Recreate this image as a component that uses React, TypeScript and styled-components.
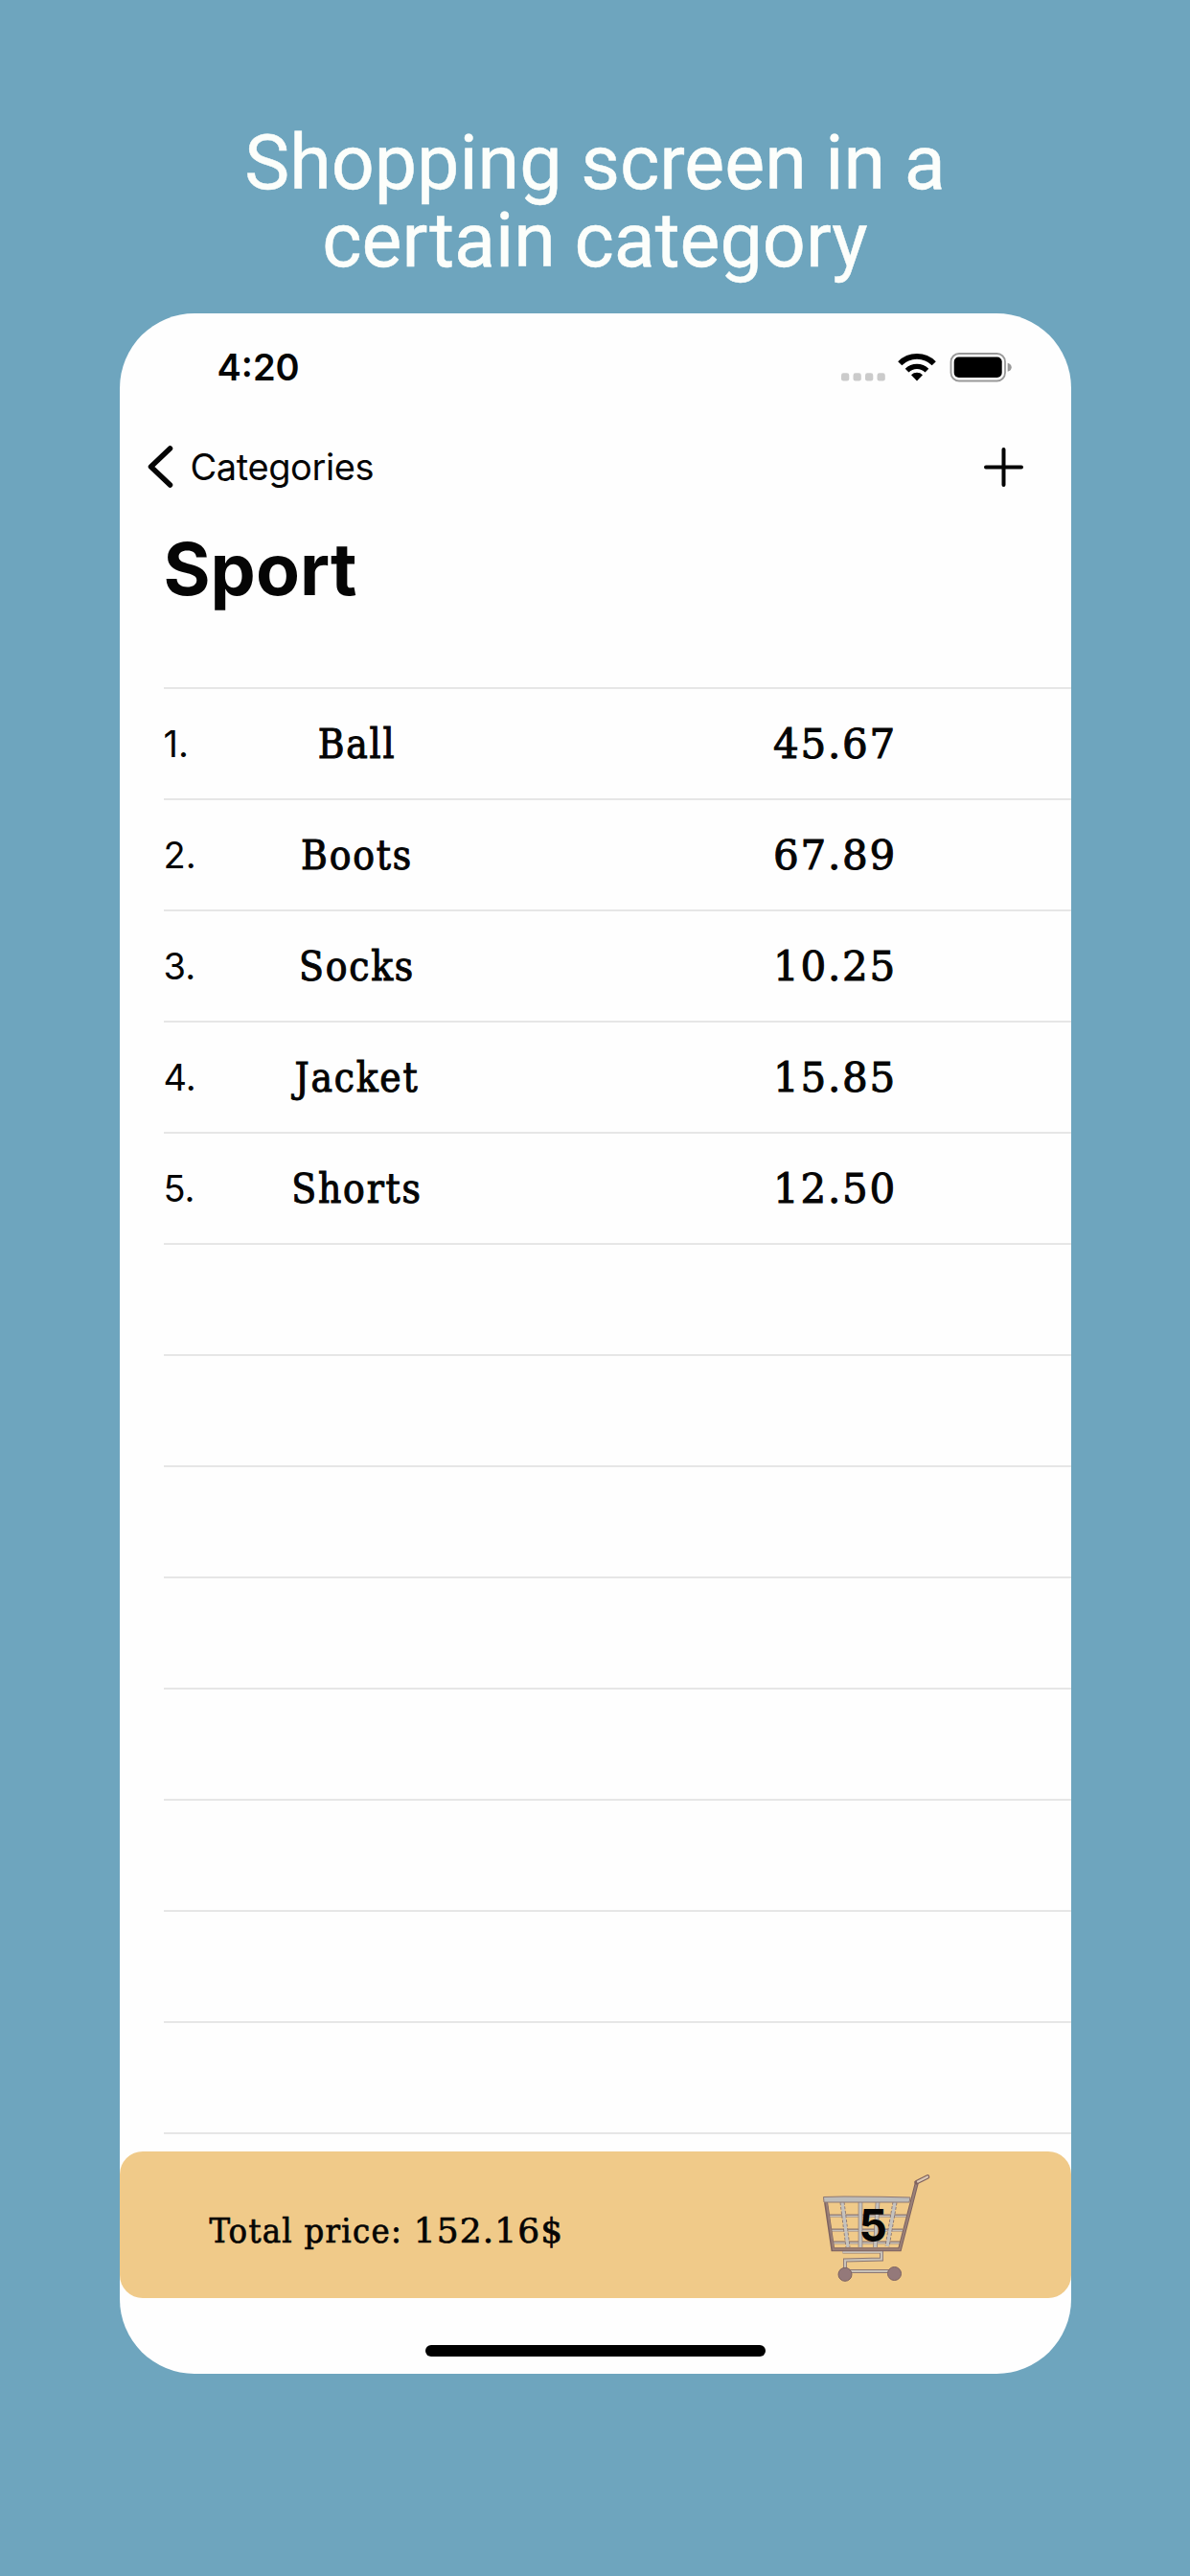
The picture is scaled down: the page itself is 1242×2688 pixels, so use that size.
import React from 'react';
import styled, { createGlobalStyle } from 'styled-components';

const Global = createGlobalStyle`
  * { box-sizing: border-box; }
  body { margin: 0; background: #6ea5be; }
`;

const sans = `Inter, "Liberation Sans", sans-serif`;

const Page = styled.main`
  width: 1242px;
  height: 2688px;
  padding-top: 130px;
  display: flex;
  flex-direction: column;
  align-items: center;
  background: #6ea5be;
  color: #050505;
  font-family: ${sans};
  overflow: hidden;
`;

const Headline = styled.h1`
  margin: 0;
  height: 197px;
  color: #fcfefb;
  font: 400 79px/81px Roboto, sans-serif;
  text-align: center;
  -webkit-text-stroke: 0.5px #fcfefb;
`;

const Phone = styled.section`
  width: 993px;
  height: 2150px;
  display: flex;
  flex-direction: column;
  background: #fefefe;
  border-radius: 78px;
  overflow: hidden;
`;

const StatusBar = styled.div`
  height: 112px;
  padding: 0 61px 0 102px;
  display: flex;
  align-items: center;
  justify-content: space-between;
`;

const Clock = styled.time`
  font-size: 38px;
  font-weight: 600;
`;

const NavBar = styled.nav`
  height: 96px;
  padding: 0 50px 0 28px;
  display: flex;
  align-items: center;
  justify-content: space-between;
`;

const BackButton = styled.button`
  display: flex;
  align-items: center;
  gap: 18px;
  padding: 0;
  border: 0;
  background: none;
  color: inherit;
  font: 400 38px/46px ${sans};
  letter-spacing: -0.4px;
`;

const IconButton = styled.button`
  display: flex;
  padding: 0;
  border: 0;
  background: none;
  color: inherit;
`;

const Title = styled.h2`
  margin: 0;
  height: 182px;
  padding: 14px 0 0 46px;
  font-size: 75px;
  font-weight: 700;
  line-height: 90px;
`;

const List = styled.ul`
  height: 1528px;
  margin: 0 0 0 46px;
  padding: 0;
  list-style: none;
  overflow: hidden;
`;

const Row = styled.li`
  height: 116px;
  padding-top: 1px;
  border-top: 2px solid #e6e6e6;
  display: grid;
  grid-template-columns: 76px 252px 1fr;
  align-items: center;
`;

const Index = styled.span`
  padding-bottom: 2px;
  font-size: 38px;
`;

const Name = styled.span`
  font: 400 42px/50px "DejaVu Serif Condensed", "DejaVu Serif", serif;
  font-stretch: condensed;
  letter-spacing: 1.8px;
  text-align: center;
  -webkit-text-stroke: 1px currentColor;
`;

const Price = styled.span`
  width: 140px;
  margin-left: 303px;
  font: 400 42px/50px "DejaVu Serif", serif;
  letter-spacing: 1.8px;
  text-align: center;
  white-space: nowrap;
  -webkit-text-stroke: 1px currentColor;
`;

const TotalBar = styled.footer`
  height: 153px;
  padding: 0 137px 0 94px;
  display: flex;
  align-items: center;
  justify-content: space-between;
  background: #f0ca89;
  border-radius: 24px;
`;

const Total = styled.p`
  margin: 0;
  padding-top: 13px;
  font: 400 36px/44px "DejaVu Serif Condensed", "DejaVu Serif", serif;
  font-stretch: condensed;
  letter-spacing: 1.3px;
  -webkit-text-stroke: 0.7px currentColor;
`;

const Amount = styled.span`
  font-family: "DejaVu Serif", serif;
  font-stretch: normal;
  letter-spacing: 1.1px;
`;

const Cart = styled.div`
  position: relative;
  width: 130px;
  height: 130px;
  margin-top: 7px;
`;

const CartCount = styled.strong`
  position: absolute;
  left: 46px;
  top: 35px;
  font-size: 46px;
  font-weight: 700;
  line-height: 54px;
`;

const HomeArea = styled.div`
  flex: 1;
  padding-top: 49px;
  display: flex;
  justify-content: center;
`;

const HomeIndicator = styled.div`
  width: 355px;
  height: 12px;
  border-radius: 6px;
  background: #000;
`;

const items = [
  { name: 'Ball', price: '45.67' },
  { name: 'Boots', price: '67.89' },
  { name: 'Socks', price: '10.25' },
  { name: 'Jacket', price: '15.85' },
  { name: 'Shorts', price: '12.50' },
];
const emptyRows = Array.from({ length: 9 }, (_, i) => i);

const StatusIcons = () => (
  <svg width="180" height="32" viewBox="0 0 180 32">
    {[0, 12.5, 25, 37.5].map((x) => (
      <rect key={x} x={1 + x} y="22.3" width="8.3" height="8.3" rx="2.4" fill="#cbcbcb" />
    ))}
    <path d="M62.25 12.25a25.1 25.1 0 0 1 35.5 0" fill="none" stroke="#000" strokeWidth="5.8" />
    <path d="M69.6 19.6a14.7 14.7 0 0 1 20.8 0" fill="none" stroke="#000" strokeWidth="5.3" />
    <path d="M80 30.5L74 24.2a8.5 8.5 0 0 1 12 0z" />
    <rect x="115.5" y="2" width="56.5" height="28.5" rx="8.5" fill="none" stroke="#999" strokeWidth="1.8" />
    <rect x="118.7" y="5.5" width="50" height="21.5" rx="5" />
    <path d="M174.7 11.7q4 1 4 4.500t-4 4.500z" fill="#999" />
  </svg>
);

const CartIcon = () => (
  <svg width="130" height="130" viewBox="0 0 130 130" fill="none">
    <g stroke="#8d7873" strokeWidth="3">
      <path d="M13 52h82M16 67h75M18 80h70" />
    </g>
    <g stroke="#c6c0b8" strokeWidth="1.6">
      <path d="M13 52.500h82M16 67.500h75M18 80.500h70" />
    </g>
    <g stroke="#8d7873" strokeWidth="5" strokeDasharray="3 1.6">
      <path d="M28 38l6 47M83 38l-8 46" />
    </g>
    <path d="M47 38v47M65 38l-2.500 47" stroke="#8d7873" strokeWidth="4.6" />
    <path d="M28 38l6 47M47 38v47M65 38l-2.500 47M83 38l-8 46" stroke="#c4c2bf" strokeWidth="3.2" />
    <path d="M28.500 89.500H69v8L31 98.500V108M31 110h51" stroke="#8d7873" strokeWidth="4" />
    <path d="M28.500 90H69v7.500L31 98.500V108M31 110h51" stroke="#c9c2b8" strokeWidth="2.2" />
    <path d="M11 38l7.300 49.300H88L106 17" stroke="#7d625f" strokeWidth="4" />
    <path d="M11.500 38l7.300 49.300H88L106 17" stroke="#9a8078" strokeWidth="2" />
    <path d="M105.500 17.300L117 11.500" stroke="#80635f" strokeWidth="4.6" strokeLinecap="round" />
    <path d="M107 16.500l10-5" stroke="#dcc9b4" strokeWidth="2.2" strokeLinecap="round" />
    <path d="M8.500 32.500L30 32l40 .300 29 .700-1 5H9z" fill="#bdbcba" stroke="#8d7873" strokeWidth="1" />
    <circle cx="31" cy="113.3" r="7" fill="#94797a" stroke="#7c6362" />
    <circle cx="82.5" cy="112.5" r="7" fill="#94797a" stroke="#7c6362" />
  </svg>
);

export default function App() {
  return (
    <Page>
      <Global />
      <Headline>Shopping screen in a<br />certain category</Headline>
      <Phone>
        <StatusBar>
          <Clock>4:20</Clock>
          <StatusIcons />
        </StatusBar>
        <NavBar>
          <BackButton>
            <svg width="28" height="46" viewBox="0 0 28 46" fill="none" stroke="currentColor" strokeWidth="5.5" strokeLinecap="round" strokeLinejoin="round">
              <path d="M24.5 4L4.5 23l20 19" />
            </svg>
            Categories
          </BackButton>
          <IconButton aria-label="Add">
            <svg width="41" height="41" viewBox="0 0 41 41" stroke="currentColor" strokeWidth="4" strokeLinecap="round">
              <path d="M20.5 2v37M2 20.5h37" />
            </svg>
          </IconButton>
        </NavBar>
        <Title>Sport</Title>
        <List>
          {items.map((item, i) => (
            <Row key={item.name}>
              <Index>{i + 1}.</Index>
              <Name>{item.name}</Name>
              <Price>{item.price}</Price>
            </Row>
          ))}
          {emptyRows.map((i) => <Row key={i} />)}
        </List>
        <TotalBar>
          <Total>Total price: <Amount>152.16$</Amount></Total>
          <Cart>
            <CartIcon />
            <CartCount>5</CartCount>
          </Cart>
        </TotalBar>
        <HomeArea><HomeIndicator /></HomeArea>
      </Phone>
    </Page>
  );
}
